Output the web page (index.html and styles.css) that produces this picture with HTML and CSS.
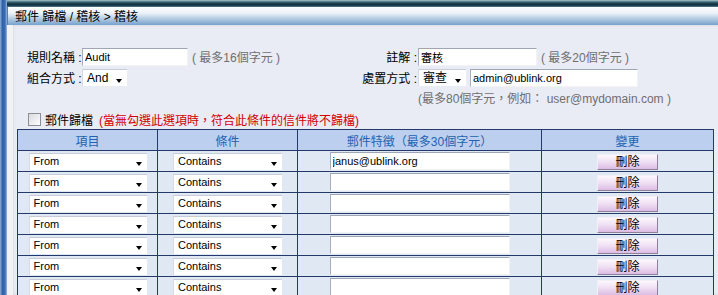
FILE: index.html
```html
<!DOCTYPE html>
<html>
<head>
  <meta charset="utf-8">
  <link rel="stylesheet" href="styles.css">
</head>
<body>
  <div class="page">
    <div class="edge"></div>
    <div class="main">
      <div class="topbar"></div>
      <div class="titlebar">郵件 歸檔 / 稽核 &gt; 稽核</div>

      <div class="content">
        <div class="form">
          <span class="lbl">規則名稱 :</span>
          <div class="ctl">
            <input class="txt w-name" value="Audit">
            <span class="hint">( 最多16個字元 )</span>
          </div>
          <span class="lbl right">註解 :</span>
          <div class="ctl">
            <input class="txt w-note" value="審核">
            <span class="hint">( 最多20個字元 )</span>
          </div>

          <span class="lbl">組合方式 :</span>
          <div class="ctl">
            <div class="sel w-and"><span>And</span><i class="arrow"></i></div>
          </div>
          <span class="lbl right">處置方式 :</span>
          <div class="ctl">
            <div class="sel w-act"><span>審查</span><i class="arrow"></i></div>
            <input class="txt w-mail" value="admin@ublink.org">
          </div>

          <span></span><span></span><span></span>
          <div class="ctl hint">(最多80個字元，例如： user@mydomain.com )</div>
        </div>

        <div class="archive">
          <span class="check"></span>
          <span>郵件歸檔</span>
          <span class="warn">(當無勾選此選項時，符合此條件的信件將不歸檔)</span>
        </div>

        <table class="rules">
          <tr>
            <th class="c1">項目</th>
            <th class="c2">條件</th>
            <th class="c3">郵件特徵（最多30個字元）</th>
            <th class="c4">變更</th>
          </tr>
          <tr>
            <td><div class="sel w-item"><span>From</span><i class="arrow"></i></div></td>
            <td><div class="sel w-cond"><span>Contains</span><i class="arrow"></i></div></td>
            <td><input class="txt w-rule" value="janus@ublink.org"></td>
            <td><button class="del">刪除</button></td>
          </tr>
          <tr>
            <td><div class="sel w-item"><span>From</span><i class="arrow"></i></div></td>
            <td><div class="sel w-cond"><span>Contains</span><i class="arrow"></i></div></td>
            <td><input class="txt w-rule" value=""></td>
            <td><button class="del">刪除</button></td>
          </tr>
          <tr>
            <td><div class="sel w-item"><span>From</span><i class="arrow"></i></div></td>
            <td><div class="sel w-cond"><span>Contains</span><i class="arrow"></i></div></td>
            <td><input class="txt w-rule" value=""></td>
            <td><button class="del">刪除</button></td>
          </tr>
          <tr>
            <td><div class="sel w-item"><span>From</span><i class="arrow"></i></div></td>
            <td><div class="sel w-cond"><span>Contains</span><i class="arrow"></i></div></td>
            <td><input class="txt w-rule" value=""></td>
            <td><button class="del">刪除</button></td>
          </tr>
          <tr>
            <td><div class="sel w-item"><span>From</span><i class="arrow"></i></div></td>
            <td><div class="sel w-cond"><span>Contains</span><i class="arrow"></i></div></td>
            <td><input class="txt w-rule" value=""></td>
            <td><button class="del">刪除</button></td>
          </tr>
          <tr>
            <td><div class="sel w-item"><span>From</span><i class="arrow"></i></div></td>
            <td><div class="sel w-cond"><span>Contains</span><i class="arrow"></i></div></td>
            <td><input class="txt w-rule" value=""></td>
            <td><button class="del">刪除</button></td>
          </tr>
          <tr>
            <td><div class="sel w-item"><span>From</span><i class="arrow"></i></div></td>
            <td><div class="sel w-cond"><span>Contains</span><i class="arrow"></i></div></td>
            <td><input class="txt w-rule" value=""></td>
            <td><button class="del">刪除</button></td>
          </tr>
        </table>
      </div>
    </div>
  </div>
</body>
</html>
```

FILE: styles.css
```css
html, body {
  margin: 0;
  height: 295px;
  overflow: hidden;
}

body {
  font-family: 'Liberation Sans', 'Noto Sans CJK TC', sans-serif;
  font-size: 12px;
  color: #000;
  background-color: #e9ebf5;
}

.page {
  display: flex;
  height: 295px;
}

.edge {
  width: 7px;
  flex: none;
  background: linear-gradient(to right, #7aa0d0 0, #7aa0d0 1px, #2d5fa8 2px, #3b6db5 5px, #9bb6dc 7px);
}

.main {
  flex: 1;
  min-width: 0;
  display: flex;
  flex-direction: column;
}

.topbar {
  flex: none;
  height: 7px;
  background: linear-gradient(to bottom, #a9c8cf 0, #3e6877 2px, #10303f 4px, #1d4454 6px, #6f93a3 7px);
}

.titlebar {
  flex: none;
  height: 18px;
  line-height: 20px;
  padding-left: 7px;
  font-size: 12px;
  color: #000;
  background: linear-gradient(to bottom, #fdfeff 0, #eaf1f8 35%, #b3cbe3 65%, #78a1cb 100%);
  border-left: 1px solid #5b7fa8;
}

.content {
  flex: 1;
  min-height: 0;
  overflow: hidden;
  padding: 22px 5px 0 10px;
  background-color: #e9ebf5;
  box-shadow: inset 7px 0 0 -1px #f2f2f5, inset 6px 0 3px #cfd1da;
}

.form {
  display: grid;
  grid-template-columns: 55px 250px 86px auto;
  grid-template-rows: 19px 19px 16px;
  row-gap: 2px;
  margin-left: 10px;
  align-items: center;
}

.lbl {
  white-space: nowrap;
}

.lbl.right {
  text-align: right;
  padding-right: 1px;
}

.ctl {
  display: flex;
  align-items: center;
  gap: 4px;
  white-space: nowrap;
}

.hint {
  color: #6f6f6f;
}

.txt {
  box-sizing: border-box;
  height: 18px;
  margin: 0;
  padding: 0 2px;
  font-family: 'Liberation Sans', 'Noto Sans CJK TC', sans-serif;
  font-size: 11px;
  color: #000;
  background-color: #fff;
  border: 1px solid;
  border-color: #9ea6b6 #f3f3f3 #f3f3f3 #a7aebc;
  outline: none;
}

.w-name { width: 106px; }
.w-note { width: 119px; }
.w-mail { width: 168px; }
.w-rule { width: 180px; }

.sel {
  box-sizing: border-box;
  display: flex;
  justify-content: space-between;
  align-items: center;
  height: 17px;
  padding: 0 5px 0 4px;
  font-size: 11px;
  background-color: #fff;
  border-top: 1px solid #c7ccd8;
  border-left: 1px solid #d7dbe4;
  white-space: nowrap;
}

.sel span {
  line-height: 15px;
}

.arrow {
  width: 0;
  height: 0;
  margin-top: 5px;
  border-left: 3.5px solid transparent;
  border-right: 3.5px solid transparent;
  border-top: 4px solid #000;
}

.w-and { width: 45px; font-size: 12px; }
.w-act { width: 48px; font-size: 12px; }
.w-item { width: 118px; margin: 0 auto; }
.w-cond { width: 109px; margin: 0 auto; }

.archive {
  display: flex;
  align-items: center;
  gap: 3px;
  height: 16px;
  margin: 6px 0 2px 11px;
}

.check {
  box-sizing: border-box;
  width: 13px;
  height: 13px;
  margin-right: 1px;
  border: 1px solid #8c8f96;
  background: linear-gradient(135deg, #d9dadf 0, #f3f3f5 70%, #ffffff 100%);
}

.warn {
  color: #d40000;
  margin-left: 3px;
}

.rules {
  width: 697px;
  border-collapse: collapse;
  table-layout: fixed;
}

.rules th,
.rules td {
  height: 20px;
  padding: 0;
  border: 1px solid #23396a;
  text-align: center;
}

.rules th {
  font-weight: normal;
  color: #2262b0;
  background-color: #bccfee;
}

.rules td {
  background-color: #e0e8f4;
}

.c1 { width: 139px; }
.c2 { width: 139px; }
.c3 { width: 243px; }

.rules .txt {
  display: block;
  margin: 0 auto;
}

.del {
  box-sizing: border-box;
  width: 61px;
  height: 16px;
  margin-top: 2px;
  padding: 0;
  font-family: 'Liberation Sans', 'Noto Sans CJK TC', sans-serif;
  font-size: 12px;
  line-height: 14px;
  color: #000;
  background: linear-gradient(to bottom, #fbf7fc 0, #f0e2f4 45%, #dcbde5 100%);
  border: 1px solid;
  border-color: #f4eef6 #8e8098 #8e8098 #f4eef6;
  cursor: pointer;
}
```
